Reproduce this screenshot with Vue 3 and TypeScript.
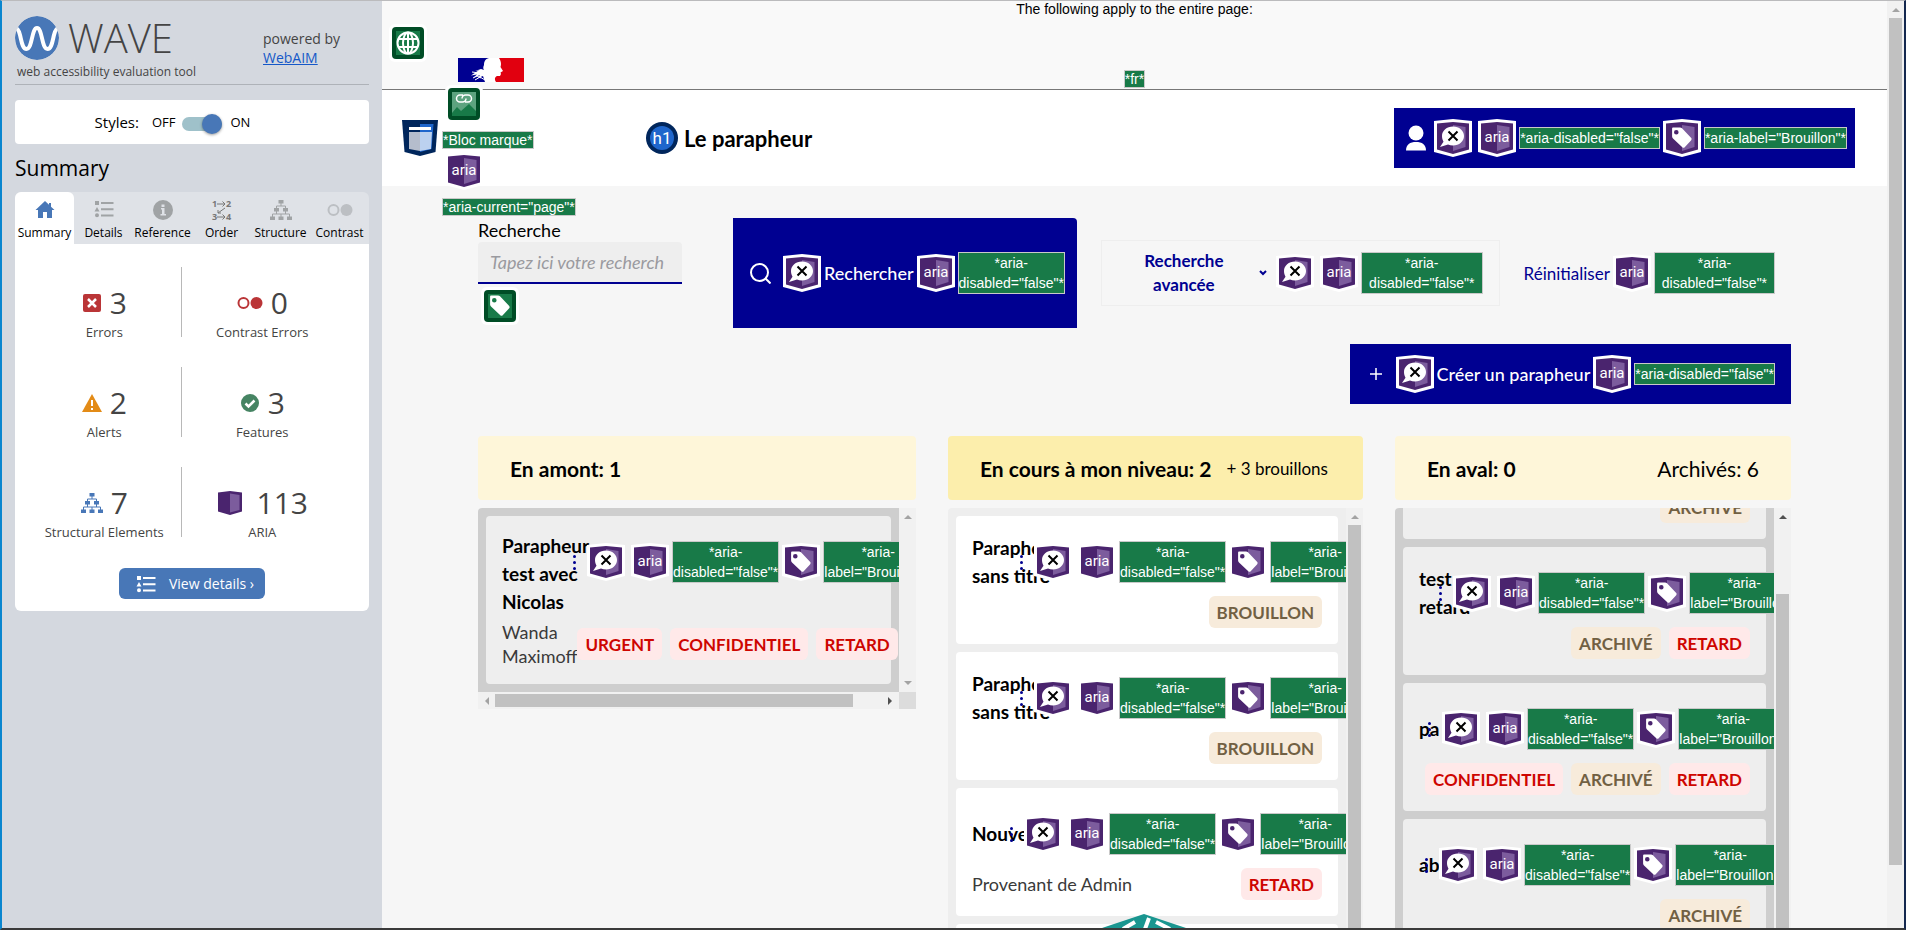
<script setup lang="ts">
interface Tab { id: string; label: string; w: number }
interface Stat { icon: string; count: number; label: string; w: number }
interface Pill { text: string; kind: 'alert' | 'note' }
interface Card { title: string[]; titleWidth: number; meta?: string; pills: Pill[] }
interface Column {
  id: string
  title: string
  extra?: string
  extraEnd?: boolean
  current?: boolean
  tone: 'dark' | 'light'
  cards: Card[]
}

const tabs: Tab[] = [
  { id: 'home', label: 'Summary', w: 20 },
  { id: 'list', label: 'Details', w: 20 },
  { id: 'info', label: 'Reference', w: 20 },
  { id: 'order', label: 'Order', w: 20 },
  { id: 'tree', label: 'Structure', w: 22 },
  { id: 'contrast', label: 'Contrast', w: 26 },
]

const stats: Stat[] = [
  { icon: 'error', count: 3, label: 'Errors', w: 20 },
  { icon: 'contrast', count: 0, label: 'Contrast Errors', w: 26 },
  { icon: 'alert', count: 2, label: 'Alerts', w: 20 },
  { icon: 'check', count: 3, label: 'Features', w: 20 },
  { icon: 'tree', count: 7, label: 'Structural Elements', w: 22 },
  { icon: 'box', count: 113, label: 'ARIA', w: 26 },
]

const urgent: Pill = { text: 'URGENT', kind: 'alert' }
const confidential: Pill = { text: 'CONFIDENTIEL', kind: 'alert' }
const late: Pill = { text: 'RETARD', kind: 'alert' }
const draft: Pill = { text: 'BROUILLON', kind: 'note' }
const archived: Pill = { text: 'ARCHIVÉ', kind: 'note' }

const columns: Column[] = [
  {
    id: 'amont',
    title: 'En amont: 1',
    tone: 'dark',
    cards: [
      {
        title: ['Parapheur', 'test avec', 'Nicolas'],
        titleWidth: 71,
        meta: 'Wanda Maximoff',
        pills: [urgent, confidential, late],
      },
    ],
  },
  {
    id: 'encours',
    title: 'En cours à mon niveau: 2',
    extra: '+ 3 brouillons',
    current: true,
    tone: 'light',
    cards: [
      { title: ['Parapheur', 'sans titre'], titleWidth: 48, pills: [draft] },
      { title: ['Parapheur', 'sans titre'], titleWidth: 48, pills: [draft] },
      { title: ['Nouveau'], titleWidth: 38, meta: 'Provenant de Admin', pills: [late] },
      { title: [''], titleWidth: 38, pills: [draft] },
    ],
  },
  {
    id: 'aval',
    title: 'En aval: 0',
    extra: 'Archivés: 6',
    extraEnd: true,
    tone: 'dark',
    cards: [
      { title: ['test'], titleWidth: 20, pills: [archived] },
      { title: ['test', 'retard'], titleWidth: 20, pills: [archived, late] },
      { title: ['pa'], titleWidth: 9, pills: [confidential, archived, late] },
      { title: ['ab'], titleWidth: 6, pills: [archived] },
    ],
  },
]
</script>

<template>
  <div class="window">
    <svg class="defs" aria-hidden="true">
      <defs>
        <symbol id="shield" viewBox="0 0 38 38">
          <path d="M0 2 19 0l19 2v31l-19 5-19-5z" fill="#fff" />
          <path d="M3 4.500 19 3l16 1.500v26L19 35 3 30.500z" fill="#4a246e" />
          <path d="m19 6 12.500 2v20L19 32z" fill="#7c5c9d" />
        </symbol>
        <symbol id="aria" viewBox="0 0 38 38">
          <use href="#shield" />
          <text x="19" y="23" text-anchor="middle" font-family="Roboto, sans-serif" font-size="15" font-weight="400" fill="#fff">aria</text>
        </symbol>
        <symbol id="speech" viewBox="0 0 38 38">
          <use href="#shield" />
          <path d="M19 7.500c6.200 0 11 4.200 11 9.500s-4.800 9.500-11 9.500c-1.800 0-3.500-.3-5-.9L6 28l3.500-5.300C8.500 21 8 19 8 17c0-5.300 4.800-9.500 11-9.500z" fill="#fff" />
          <path d="m14.500 12.500 9 9m0-9-9 9" stroke="#000" stroke-width="2" fill="none" />
        </symbol>
        <symbol id="tagshape" viewBox="0 0 38 38">
          <path fill-rule="evenodd" d="M10 8.500h7c.8 0 1.500.3 2 .8l9 9.500c.8.800.8 1.700.2 2.400l-6.500 7c-.7.800-1.700.8-2.400.1L10 19.500c-.6-.6-.9-1.300-.9-2V9.500c0-.6.3-1 .9-1zm3.300 2.500a2.300 2.300 0 1 0 0 4.600 2.300 2.300 0 0 0 0-4.600z" fill="#fff" />
        </symbol>
        <symbol id="label" viewBox="0 0 38 38">
          <use href="#shield" />
          <use href="#tagshape" />
        </symbol>
        <symbol id="green" viewBox="0 0 38 38">
          <rect width="38" height="38" rx="6" fill="#fff" />
          <rect x="3" y="3" width="32" height="32" rx="4" fill="#004d26" />
          <rect x="7" y="7" width="24" height="24" fill="#187a48" />
        </symbol>
        <symbol id="home" viewBox="0 0 20 20">
          <path d="M10 1 0.500 10H3v8h5v-6h4v6h5v-8h2.500L16 6.700V3h-2v1.800z" />
        </symbol>
        <symbol id="list" viewBox="0 0 20 20">
          <path d="M1 1h4v4H1zM3 7l2.500 4.500h-5zM3 13.200a2 2 0 1 1 0 4 2 2 0 0 1 0-4zM7 2h12.500v2H7zM7 8.300h12.500v2H7zM7 14.500h12.500v2H7z" />
        </symbol>
        <symbol id="info" viewBox="0 0 20 20">
          <circle cx="10" cy="10" r="10" />
          <path d="M8.500 4.500h3v2.400h-3zM8 8h3.500v6H13v1.500H7.500V14H9V9.500H8z" fill="#dfe2e7" />
        </symbol>
        <symbol id="order" viewBox="0 0 20 20">
          <g font-family="Open Sans, sans-serif" font-size="9" font-weight="700">
            <text x="0" y="7">1</text>
            <text x="14" y="7">2</text>
            <text x="0" y="20">3</text>
            <text x="14" y="20">4</text>
          </g>
          <path d="M5 4h8m-2.500-2.500L13 4l-2.500 2.500M5 17h8m-2.500-2.500L13 17l-2.500 2.500M13 8l-7 5m0-3v3h3" fill="none" stroke="currentColor" />
        </symbol>
        <symbol id="tree" viewBox="0 0 22 20">
          <path d="M8.500 0h5v3.500h-5zM4 8h5v3.500H4zM13 8h5v3.500h-5zM0 16.500h5V20H0zM8.500 16.500h5V20h-5zM17 16.500h5V20h-5z" />
          <path d="M11 3v3M6.500 8V6h9v2M6.500 11v3M15.500 11v3M2.500 17v-3h17v3M11 14v3" fill="none" stroke="currentColor" />
        </symbol>
        <symbol id="contrast" viewBox="0 0 26 20">
          <circle cx="6.500" cy="10" r="5" fill="none" stroke="currentColor" stroke-width="2" />
          <circle cx="19.500" cy="10" r="6" />
        </symbol>
        <symbol id="error" viewBox="0 0 20 20">
          <rect x="1" y="1" width="18" height="18" rx="2" />
          <path d="m6 6 8 8m0-8-8 8" stroke="#fff" stroke-width="2.500" />
        </symbol>
        <symbol id="alert" viewBox="0 0 20 20">
          <path d="M10 1 20 19H0z" />
          <path d="M9 7h2v6H9zM9 15h2v2H9z" fill="#fff" />
        </symbol>
        <symbol id="check" viewBox="0 0 20 20">
          <circle cx="10" cy="10" r="9" />
          <path d="m5.500 10.500 3 3 6-6" fill="none" stroke="#fff" stroke-width="2.500" />
        </symbol>
        <symbol id="box" viewBox="0 0 26 24">
          <path d="M1 1.500 13 0l12 1.500v19L13 24 1 20.500z" />
          <path d="m13 2.500 9.500 1.500v15L13 21.500z" fill="#7c5c9d" />
        </symbol>
      </defs>
    </svg>

    <aside class="side">
      <header class="brand">
        <div class="brand-main">
          <div class="brand-row">
            <svg class="logo" viewBox="0 0 44 44" aria-hidden="true">
              <circle cx="22" cy="22" r="22" fill="#4877b7" />
              <path d="M-1 12c3 0 4.500 1 6 7 1.600 6.500 2.500 14 6.500 14 6 0 5-21 10.500-21s4.500 21 10.500 21c4 0 4.900-7.500 6.500-14 1.500-6 3-7 6-7" fill="none" stroke="#fff" stroke-width="4" />
            </svg>
            <span class="wave">WAVE</span>
          </div>
          <span class="tagline">web accessibility evaluation tool</span>
        </div>
        <p class="powered">powered by<br /><a href="#webaim">WebAIM</a></p>
      </header>

      <div class="styles">
        <span class="styles-name">Styles:</span>
        <label class="switch">
          <span>OFF</span>
          <input type="checkbox" checked aria-label="Styles" />
          <span>ON</span>
        </label>
      </div>

      <h2 class="side-title">Summary</h2>
      <nav class="tabs">
        <button v-for="(t, i) in tabs" :key="t.id" type="button" :class="['tab', 'tab-' + t.id, { active: i === 0 }]">
          <svg :width="t.w" height="20" aria-hidden="true"><use :href="'#' + t.id" /></svg>
          <span>{{ t.label }}</span>
        </button>
      </nav>
      <section class="panel">
        <div class="stats">
          <div v-for="s in stats" :key="s.label" class="stat">
            <div class="stat-top">
              <svg :class="'ic-' + s.icon" :width="s.w" :height="s.icon === 'box' ? 24 : 20" aria-hidden="true"><use :href="'#' + s.icon" /></svg>
              <strong>{{ s.count }}</strong>
            </div>
            <span>{{ s.label }}</span>
          </div>
        </div>
        <button type="button" class="details">
          <svg width="20" height="18" viewBox="0 0 20 18" aria-hidden="true"><use href="#list" width="20" height="20" /></svg>
          <span>View details ›</span>
        </button>
      </section>
    </aside>

    <main class="page">
      <div class="topnote">
        <p>The following apply to the entire page:</p>
        <span class="code">*fr*</span>
        <svg class="globe" width="38" height="38" viewBox="0 0 38 38" aria-hidden="true">
          <use href="#green" />
          <g fill="none" stroke="#fff" stroke-width="2">
            <circle cx="19" cy="19" r="10.500" />
            <ellipse cx="19" cy="19" rx="5" ry="10.500" />
            <path d="M9.500 15h19M9.500 23h19M19 8v22" />
          </g>
        </svg>
      </div>

      <header class="bar">
        <div class="logo-block">
          <svg class="flag" width="66" height="24" viewBox="0 0 66 24" aria-hidden="true">
            <path d="M0 0h66v24H0z" fill="#fff" />
            <path d="M0 0h31c-4 1-5 4-5 7-1 2-1 4 0 5l-3-1-6 2 4-.5-5 3-3 2 6-1-4 3.500 7-3-2 3 5-2 2 6H0z" fill="#000091" />
            <path d="M41 0h25v24H38c-2-3-1-5 1-6h3l1-2-.5-1.500L45 13l-2.500-4c1-3 .5-6-1.500-9z" fill="#e1000f" />
            <path d="m14 14 4 .500 5-2M15 20l4-2 4 2M17 22l5-3 5 3" fill="none" stroke="#fff" />
          </svg>
          <svg class="ann-block" width="38" height="38" viewBox="0 0 38 38" aria-hidden="true">
            <use href="#green" />
            <path d="M7 7h24v19l-7-7-8 7-4-4-5 6z" fill="#5da37f" />
            <path d="M18 10h-3a3.500 3.500 0 0 0 0 7h2.500a3.500 3.500 0 0 0 3.500-3.500M20 17h3a3.500 3.500 0 0 0 0-7h-2.500a3.500 3.500 0 0 0-3.500 3.500" fill="none" stroke="#fff" stroke-width="1.500" />
          </svg>
          <span class="code">*Bloc marque*</span>
          <svg class="ann-block" width="38" height="38" aria-hidden="true"><use href="#aria" /></svg>
          <span class="code">*aria-current="page"*</span>
        </div>
        <svg class="region" width="36" height="36" viewBox="0 0 36 36" aria-hidden="true">
          <path d="M0 0h36l-2.500 32L18 36 2.500 32z" fill="#00265c" />
          <path d="M18 4h13.500l-2 25L18 32z" fill="#1f66cc" />
          <path d="M7 7h22v3H7z" fill="#fff" />
          <path d="M7 12h11v19l-11-2z" fill="#b5bdcc" />
          <path d="M18 12h12l-1 17-11 2z" fill="#bcd1ef" />
        </svg>
        <h1>
          <svg width="32" height="32" viewBox="0 0 32 32" aria-hidden="true">
            <circle cx="16" cy="16" r="16" fill="#00265c" />
            <circle cx="16" cy="16" r="12" fill="#1f66cc" />
            <text x="16" y="22" text-anchor="middle" font-family="Roboto, sans-serif" font-size="17" font-weight="400" fill="#fff">h1</text>
          </svg>
          Le parapheur
        </h1>
        <button type="button" class="blue user">
          <svg width="20" height="26" viewBox="0 0 20 26" aria-hidden="true"><circle cx="10" cy="8" r="7.500" fill="#fff" /><path d="M0 25.500c0-6 4-8.500 10-8.500s10 2.500 10 8.500z" fill="#fff" /></svg>
          <svg class="ann gap" aria-hidden="true"><use href="#speech" /></svg>
          <svg class="ann" aria-hidden="true"><use href="#aria" /></svg>
          <span class="code tall">*aria-disabled="false"*</span>
          <svg class="ann" aria-hidden="true"><use href="#label" /></svg>
          <span class="code tall">*aria-label="Brouillon"*</span>
        </button>
      </header>

      <div class="content">
        <div class="search">
          <div class="field">
            <label for="q">Recherche</label>
            <input id="q" type="text" placeholder="Tapez ici votre recherch" />
            <svg class="field-tag" width="38" height="38" aria-hidden="true"><use href="#green" /><use href="#tagshape" /></svg>
          </div>
          <button type="button" class="blue find">
            <svg class="lens" width="21" height="21" viewBox="0 0 21 21" aria-hidden="true"><circle cx="9.500" cy="9.500" r="8.500" fill="none" stroke="#fff" stroke-width="2" /><path d="m15.500 15.500 5 5" stroke="#fff" stroke-width="2" /></svg>
            <svg class="ann" aria-hidden="true"><use href="#speech" /></svg>
            <span>Rechercher</span>
            <svg class="ann" aria-hidden="true"><use href="#aria" /></svg>
            <span class="code tall">*aria-<br />disabled="false"*</span>
          </button>
          <button type="button" class="advanced">
            <span class="adv-text">Recherche avancée</span>
            <svg class="chev" width="8" height="6" viewBox="0 0 8 6" aria-hidden="true"><path d="m1 1 3 3 3-3" fill="none" stroke="#000091" stroke-width="2" /></svg>
            <svg class="ann gap" aria-hidden="true"><use href="#speech" /></svg>
            <svg class="ann" aria-hidden="true"><use href="#aria" /></svg>
            <span class="code tall grow">*aria-<br />disabled="false"*</span>
          </button>
          <button type="button" class="reset">
            <span>Réinitialiser</span>
            <svg class="ann" aria-hidden="true"><use href="#aria" /></svg>
            <span class="code tall grow">*aria-<br />disabled="false"*</span>
          </button>
        </div>

        <button type="button" class="blue create">
          <svg class="plus" width="12" height="12" viewBox="0 0 12 12" aria-hidden="true"><path d="M6 0v12M0 6h12" stroke="#fff" stroke-width="1.500" /></svg>
          <svg class="ann" aria-hidden="true"><use href="#speech" /></svg>
          <span>Créer un parapheur</span>
          <svg class="ann" aria-hidden="true"><use href="#aria" /></svg>
          <span class="code tall">*aria-disabled="false"*</span>
        </button>

        <div class="board">
          <section v-for="c in columns" :key="c.id" :class="['col', c.id]">
            <header :class="['col-head', { current: c.current }]">
              <h2>{{ c.title }}</h2>
              <span v-if="c.extra" :class="c.extraEnd ? 'extra-end' : 'extra'">{{ c.extra }}</span>
            </header>
            <div :class="['list', c.tone]">
              <div class="view">
                <div class="cards">
                  <article v-for="(card, i) in c.cards" :key="i" class="card">
                    <div class="card-top">
                      <h3 :style="{ width: card.titleWidth + 'px' }">
                        <span v-for="line in card.title" :key="line">{{ line }}</span>
                      </h3>
                      <div class="notes">
                        <svg class="dots" width="3" height="15" viewBox="0 0 3 15" aria-hidden="true"><g fill="#000091"><circle cx="1.500" cy="1.500" r="1.500" /><circle cx="1.500" cy="7.500" r="1.500" /><circle cx="1.500" cy="13.500" r="1.500" /></g></svg>
                        <svg class="ann gap" aria-hidden="true"><use href="#speech" /></svg>
                        <svg class="ann" aria-hidden="true"><use href="#aria" /></svg>
                        <span class="code tall">*aria-<br />disabled="false"*</span>
                        <svg class="ann" aria-hidden="true"><use href="#label" /></svg>
                        <span class="code tall">*aria-<br />label="Brouillon"*</span>
                      </div>
                    </div>
                    <div class="card-foot">
                      <p>{{ card.meta }}</p>
                      <div class="pills">
                        <span v-for="p in card.pills" :key="p.text" :class="['pill', p.kind]">{{ p.text }}</span>
                      </div>
                    </div>
                  </article>
                </div>
              </div>
              <div class="vbar"><i class="arrow up"></i><i class="thumb"></i><i v-if="c.id === 'amont'" class="arrow down"></i></div>
              <template v-if="c.id === 'amont'">
                <div class="hbar"><i class="arrow left"></i><i class="thumb"></i><i class="arrow right"></i></div>
                <div class="corner"></div>
              </template>
            </div>
          </section>
        </div>
      </div>

      <svg class="hex" width="100" height="15" viewBox="0 0 100 15" aria-hidden="true">
        <path d="M50 1 95 16H5z" fill="#1a9690" />
        <path d="m55 5-4 11M29 16l12-7M62 9l14 7" fill="none" stroke="#fff" stroke-width="4" />
      </svg>
    </main>

    <div class="vbar page-bar"><i class="arrow up"></i><i class="thumb"></i></div>
  </div>
</template>

<style>
html,
body {
  margin: 0;
  overflow: hidden;
}
</style>

<style scoped>
* {
  box-sizing: border-box;
}
.window {
  display: flex;
  height: 100vh;
  overflow: hidden;
  border: solid;
  border-width: 1px 2px 2px;
  border-color: #bbbbbd #14284f #3a3a3a #0a86cf;
  font-family: Lato, "Open Sans", sans-serif;
}
.defs {
  position: absolute;
  width: 0;
  height: 0;
}
button {
  border: 0;
  padding: 0;
  background: none;
  font: inherit;
  color: inherit;
  cursor: pointer;
}
h1, h2, h3, p {
  margin: 0;
}

/* Sidebar */
.side {
  flex: none;
  width: 380px;
  padding: 14px 13px 0;
  background: #d4d8df;
  font-family: "Open Sans", sans-serif;
  color: #000;
}
.brand {
  display: flex;
  justify-content: space-between;
  height: 70px;
  border-bottom: 1px solid #aeb2b8;
}
.brand-row {
  display: flex;
  align-items: center;
  gap: 9px;
  height: 46px;
}
.logo {
  width: 44px;
  height: 44px;
  border-radius: 50%;
}
.wave {
  font-size: 40px;
  font-weight: 300;
  line-height: 46px;
  color: #444;
}
.tagline {
  display: block;
  margin-left: 2px;
  font-size: 12px;
  line-height: 22px;
  color: #444;
}
.powered {
  width: 106px;
  padding-top: 14px;
  font-size: 14px;
  line-height: 19px;
  color: #444;
}
.powered a {
  color: #1558c8;
}
.styles {
  display: flex;
  align-items: center;
  justify-content: center;
  gap: 13px;
  height: 44px;
  margin-top: 15px;
  padding-right: 39px;
  border-radius: 4px;
  background: #fff;
}
.styles-name {
  font-size: 15px;
}
.switch {
  display: flex;
  align-items: center;
  gap: 6px;
  font-size: 13px;
}
.switch input {
  appearance: none;
  position: relative;
  width: 40px;
  height: 14px;
  margin: 3px 3px 0 0;
  border-radius: 7px;
  background: #9fc1ca;
}
.switch input::after {
  content: "";
  position: absolute;
  top: -3px;
  right: 0;
  width: 20px;
  height: 20px;
  border-radius: 50%;
  background: #4877b7;
  box-shadow: 0 1px 3px rgba(0, 0, 0, 0.4);
}
.side-title {
  margin: 9px 0;
  font-size: 21px;
  font-weight: 400;
  line-height: 30px;
}
.tabs {
  display: grid;
  grid-template-columns: repeat(6, 1fr);
  height: 52px;
  border-radius: 6px 6px 0 0;
  background: #dfe2e7;
}
.tab {
  display: flex;
  flex-direction: column;
  align-items: center;
  gap: 4px;
  padding-top: 8px;
  border-radius: 6px 6px 0 0;
  font-size: 12px;
  line-height: 18px;
  color: #000;
}
.tab svg {
  color: #a0a3a5;
  fill: currentColor;
}
.tab-order svg {
  color: #777;
}
.tab.active {
  background: #fff;
}
.tab.active svg {
  color: #4877b7;
}
.tab-contrast svg {
  color: #bcbfc3;
}
.panel {
  padding: 23px 0 12px;
  border-radius: 0 0 6px 6px;
  background: #fff;
  text-align: center;
}
.stats {
  display: grid;
  grid-template-columns: 1fr 1fr;
  row-gap: 30px;
  padding: 0 30px 0 9px;
}
.stat {
  height: 70px;
  padding: 18px 0 0 4px;
  font-size: 13px;
  line-height: 24px;
  color: #444;
}
.stat:nth-child(odd) {
  border-right: 1px solid #b8b8b8;
}
.stat-top {
  display: flex;
  align-items: center;
  justify-content: center;
  gap: 8px;
  height: 35px;
}
.stat svg {
  fill: currentColor;
}
.stat strong {
  font-size: 30px;
  font-weight: 400;
  line-height: 34px;
}
.stat .ic-error,
.stat .ic-contrast {
  color: #ba3537;
}
.ic-alert {
  color: #e38b17;
}
.ic-check {
  color: #468463;
}
.ic-tree {
  color: #4877b7;
}
.ic-box {
  margin-right: 6px;
  color: #4a246e;
}
.details {
  display: inline-flex;
  align-items: center;
  gap: 13px;
  height: 31px;
  margin-top: 31px;
  padding: 0 11px 0 17px;
  border-radius: 6px;
  background: #4877b7;
  color: #fff;
  font-size: 14px;
}
.details svg {
  fill: currentColor;
}

/* Page */
.page {
  position: relative;
  flex: 1;
  min-width: 0;
  overflow: hidden;
  background: #f6f6f6;
}
.code {
  flex: none;
  border: 1px solid #c9c9c9;
  background: #187a48;
  color: #fff;
  font-family: "Liberation Sans", Arial, sans-serif;
  font-size: 14px;
  font-weight: 400;
  line-height: 16px;
  text-align: center;
  white-space: nowrap;
}
.code.tall {
  line-height: 20px;
}
.code.grow {
  flex: 1;
}
.ann {
  flex: none;
  width: 38px;
  height: 38px;
}
.topnote {
  position: relative;
  display: flex;
  flex-direction: column;
  align-items: center;
  justify-content: space-between;
  height: 89px;
  padding-bottom: 1px;
  border-bottom: 1px solid #777;
  background: #f9f9f9;
  font-family: "Liberation Sans", Arial, sans-serif;
  font-size: 14px;
  line-height: 16px;
}
.globe {
  position: absolute;
  left: 7px;
  top: 23px;
}
.bar {
  position: relative;
  display: flex;
  align-items: center;
  justify-content: space-between;
  height: 96px;
  padding: 0 32px 0 20px;
  background: #fff;
}
.logo-block {
  position: absolute;
  z-index: 1;
  left: 60px;
  top: -32px;
  display: flex;
  flex-direction: column;
  align-items: flex-start;
}
.flag {
  margin-left: 16px;
}
.ann-block {
  margin: 3px 0 8px 3px;
}
.region {
  flex: none;
}
h1 {
  display: flex;
  flex: 1;
  align-items: center;
  gap: 6px;
  margin-left: 208px;
  font-size: 22px;
  font-weight: 700;
}
.blue {
  display: flex;
  align-items: center;
  gap: 3px;
  background: #000091;
  color: #fff;
  font-size: 18px;
  font-weight: 500;
}
.user {
  height: 60px;
  padding: 0 8px 0 12px;
}
.ann + .ann {
  margin-left: 3px;
}
.user .gap {
  margin-left: 5px;
}
.content {
  display: flex;
  flex-direction: column;
  padding: 32px 96px 0;
}
.search {
  display: flex;
  align-items: center;
  height: 110px;
}
.field {
  align-self: flex-start;
  width: 204px;
  margin-right: 51px;
}
.field label {
  display: block;
  font-size: 18px;
  line-height: 24px;
}
.field input {
  display: block;
  width: 100%;
  height: 42px;
  padding: 0 4px 0 12px;
  border: 0;
  border-bottom: 2px solid #000091;
  border-radius: 4px 4px 0 0;
  background: #eee;
  font: italic 18px Lato, sans-serif;
}
.field input::placeholder {
  color: #9a9a9f;
}
.field-tag {
  display: block;
  margin: 3px 0 0 3px;
}
.find {
  flex: none;
  align-self: stretch;
  padding: 0 12px 0 17px;
  border-radius: 0 4px 0 0;
}
.lens {
  margin-right: 9px;
}
.advanced {
  display: flex;
  flex: 400 1 0;
  align-items: center;
  gap: 3px;
  height: 66px;
  margin-left: 24px;
  padding: 0 16px 0 34px;
  border: 1px solid #eee;
  color: #000091;
  font-size: 17px;
  font-weight: 700;
  line-height: 24px;
}
.adv-text {
  width: 96px;
}
.chev {
  margin-left: 24px;
}
.advanced .gap {
  margin-left: 6px;
}
.reset {
  display: flex;
  flex: 290 1 0;
  align-items: center;
  gap: 3px;
  padding: 0 16px 0 24px;
  color: #000091;
  font-size: 17px;
}
.create {
  align-self: flex-end;
  height: 60px;
  margin-top: 16px;
  padding: 0 16px 0 20px;
}
.plus {
  margin-right: 11px;
}
.board {
  display: grid;
  grid-template-columns: minmax(0, 438fr) minmax(0, 415fr) minmax(0, 396fr);
  gap: 32px;
  margin-top: 32px;
}
.col-head {
  display: flex;
  align-items: center;
  gap: 15px;
  height: 64px;
  padding: 0 32px;
  border-radius: 4px;
  background: #fef6d9;
}
.col-head.current {
  background: #fceeac;
}
h2 {
  font-size: 21px;
  font-weight: 700;
  white-space: nowrap;
}
.extra {
  font-size: 17px;
  white-space: nowrap;
}
.extra-end {
  margin-left: auto;
  font-size: 21px;
}
.list {
  display: grid;
  grid-template-columns: minmax(0, 1fr) 17px;
  margin-top: 8px;
  border-radius: 4px 0 0 0;
  overflow: hidden;
  background: #cecece;
}
.list.light {
  background: #eee;
}
.encours .list,
.aval .list {
  height: calc(100vh - 508px);
}
.view {
  overflow: hidden;
}
.cards {
  display: flex;
  flex-direction: column;
  gap: 8px;
  padding: 8px;
}
.aval .cards {
  margin-top: -105px;
}
.card {
  padding: 16px;
  border-radius: 4px;
  background: #eee;
}
.light .card {
  background: #fff;
}
.card-top {
  display: flex;
  align-items: center;
  min-height: 60px;
}
.card-top h3 {
  flex: none;
  font-size: 19px;
  font-weight: 700;
  line-height: 28px;
}
.card-top h3 span {
  display: block;
  white-space: nowrap;
}
.notes {
  display: flex;
  flex: none;
  align-items: center;
  align-self: flex-start;
  gap: 3px;
  height: 60px;
}
.notes .gap {
  margin-left: 8px;
}
.card-foot {
  display: flex;
  align-items: center;
  justify-content: space-between;
  min-height: 32px;
  margin-top: 4px;
  color: #3a3a3a;
  font-size: 18px;
  line-height: 24px;
}
.pills {
  display: flex;
  flex: none;
  gap: 8px;
}
.pill {
  padding: 2px 8px 0;
  border-radius: 6px;
  font-size: 17px;
  font-weight: 700;
  line-height: 30px;
}
.alert {
  background: #ffe9e9;
  color: #ce0500;
}
.note {
  background: #f7ebdb;
  color: #716043;
}

/* Scrollbars */
.vbar {
  display: flex;
  flex-direction: column;
  align-items: center;
  background: #f1f1f1;
}
.hbar {
  display: flex;
  align-items: center;
  height: 17px;
  background: #f1f1f1;
}
.corner {
  background: #dcdcdc;
}
.thumb {
  flex: none;
  background: #c1c1c1;
}
.vbar .thumb {
  width: 13px;
  height: 100%;
}
.amont .vbar {
  justify-content: space-between;
}
.amont .vbar .thumb {
  display: none;
}
.hbar .thumb {
  width: 85%;
  height: 13px;
}
.aval .vbar .thumb {
  margin-top: 69px;
}
.arrow {
  flex: none;
  width: 0;
  height: 0;
  border: 4px solid transparent;
}
.up {
  margin: 3px 0 6px;
  border-bottom-color: #a3a3a3;
}
.aval .up {
  border-bottom-color: #505050;
}
.down {
  margin-bottom: 3px;
  border-top-color: #a3a3a3;
}
.left {
  margin: 0 6px 0 3px;
  border-right-color: #a3a3a3;
}
.right {
  margin: 0 3px 0 auto;
  border-left-color: #505050;
}
.page-bar {
  flex: none;
  width: 17px;
}
.page-bar .thumb {
  height: 91.400%;
}
.hex {
  position: absolute;
  left: 712px;
  bottom: 0;
}
</style>
